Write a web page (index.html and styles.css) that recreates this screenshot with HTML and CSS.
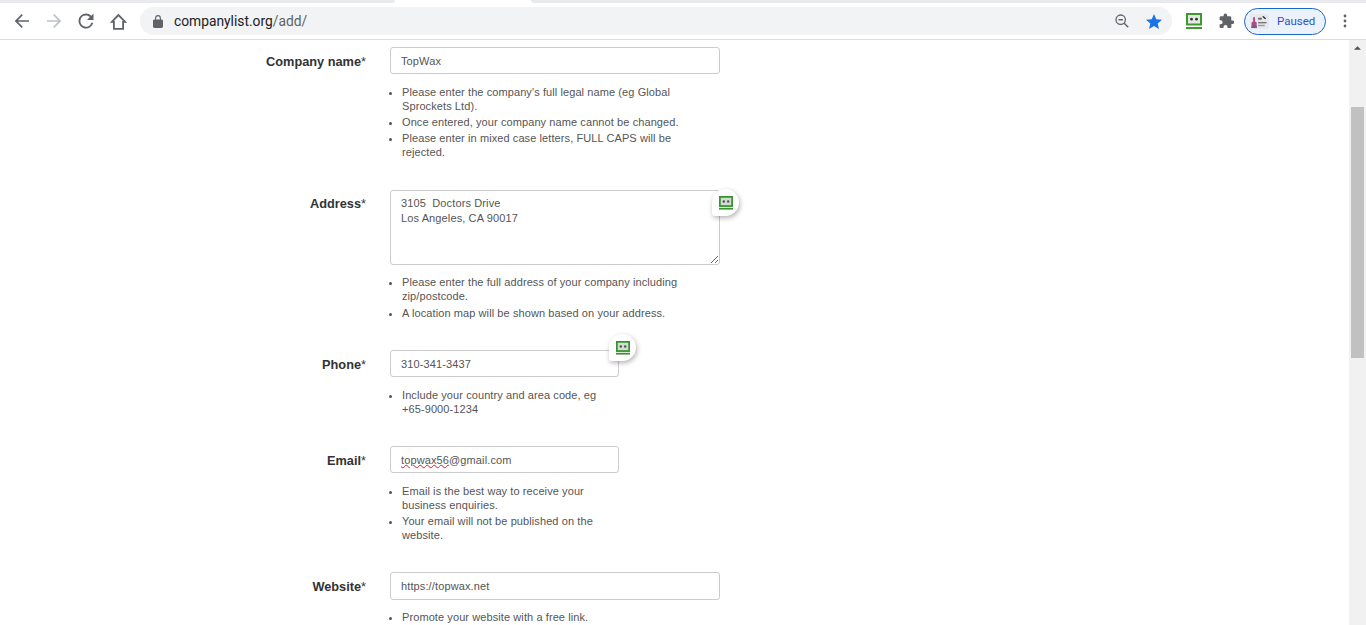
FILE: index.html
```html
<!DOCTYPE html>
<html lang="en">
<head>
<meta charset="utf-8">
<title>Add company</title>
<link rel="stylesheet" href="styles.css">
</head>
<body>
<header class="chrome">
  <div class="tabstrip">
    <div class="tab-rest tab-left"></div>
    <div class="tab-active"></div>
    <div class="tab-rest tab-right"></div>
  </div>
  <div class="toolbar">
    <svg class="nav-icon" viewBox="0 0 16 16"><path d="M15 7.200H3.900l4.900-5L7.700 1 .7 8l7 7 1.100-1.200-4.900-5H15z" fill="#5f6368"/></svg>
    <svg class="nav-icon" viewBox="0 0 16 16"><path d="M1 7.200h11.100l-4.900-5L8.300 1l7 7-7 7-1.100-1.200 4.900-5H1z" fill="#bdc1c6"/></svg>
    <svg class="nav-icon" viewBox="0 0 16 16"><path d="M13.300 2.700A7.400 7.400 0 0 0 8 .5a7.500 7.500 0 1 0 7.300 9.300h-2A5.600 5.600 0 1 1 8 2.400c1.500 0 2.900.6 3.900 1.700L9 7h6.500V.5z" fill="#5f6368"/></svg>
    <svg class="nav-icon home" viewBox="0 0 17 17"><path d="M8.500 2 1.800 8.900h2.100v6.900h9.200V8.900h2.100z" fill="none" stroke="#5f6368" stroke-width="1.800" stroke-linejoin="miter"/></svg>
    <div class="omnibox">
      <svg class="lock" viewBox="0 0 10 13"><path d="M8.500 4.400h-.6V3a2.900 2.900 0 0 0-5.800 0v1.400h-.6C.7 4.400 0 5 0 5.800v5.800c0 .8.700 1.400 1.500 1.400h7c.8 0 1.500-.6 1.500-1.400V5.800c0-.8-.7-1.400-1.500-1.400zM3.200 3a1.800 1.800 0 0 1 3.600 0v1.400H3.200z" fill="#5f6368"/></svg>
      <span class="url">companylist.org<span class="url-path">/add/</span></span>
      <svg class="zoom-out" viewBox="0 0 14 14"><circle cx="5.700" cy="5.700" r="4.700" fill="none" stroke="#5f6368" stroke-width="1.300"/><path d="M3.500 5.700h4.400M9.200 9.200l4 4" stroke="#5f6368" stroke-width="1.400" fill="none"/></svg>
      <svg class="star" viewBox="0 0 16 15"><path d="m8 0 2.300 5.200 5.700.5-4.300 3.800 1.300 5.500L8 12.100 3 15l1.300-5.500L0 5.700l5.700-.5z" fill="#1a73e8"/></svg>
    </div>
    <svg class="rf-toolbar" viewBox="0 0 16 16"><rect x="1" y="1" width="14" height="10.500" fill="#e4e8e2" stroke="#3c9a2e" stroke-width="2"/><circle cx="5.500" cy="6.200" r="1.400" fill="#333"/><circle cx="10.500" cy="6.200" r="1.400" fill="#333"/><rect y="14" width="16" height="2" fill="#3c9a2e"/></svg>
    <svg class="puzzle" viewBox="0 0 16 16"><path d="M14.300 7.400h-1V4.700c0-.8-.6-1.400-1.400-1.400H9.200v-1a1.800 1.800 0 0 0-3.600 0v1H3c-.8 0-1.400.6-1.400 1.400v2.500h1a2 2 0 0 1 0 4h-1v2.500c0 .8.600 1.400 1.400 1.400h2.500v-1a2 2 0 0 1 4 0v1h2.500c.8 0 1.400-.6 1.400-1.400V11h1a1.800 1.800 0 0 0 0-3.600z" fill="#5f6368"/></svg>
    <div class="profile">
      <svg class="avatar" viewBox="0 0 20 16"><rect width="20" height="16" rx="3" fill="#e6e8ee"/><path d="M1.500 15V9l1.700-1V3.500h2V8l1.800 1v6z" fill="#b04a80"/><rect x="1.500" y="12.500" width="5.500" height="2.500" fill="#6a5a90"/><rect x="8.500" y="4" width="4" height="2" fill="#666"/><path d="m14 2 3 2.500-1 1-3-2.500z" fill="#222"/><rect x="8.500" y="8.500" width="9" height="1.500" fill="#777"/><rect x="8.500" y="11.500" width="7" height="1.500" fill="#999"/></svg>
      <span class="profile-text">Paused</span>
    </div>
    <svg class="kebab" viewBox="0 0 4 14"><circle cx="2" cy="2" r="1.400"/><circle cx="2" cy="7" r="1.400"/><circle cx="2" cy="12" r="1.400"/></svg>
  </div>
</header>

<div class="viewport">
  <main class="page">
    <section class="row row-first">
      <div class="label">Company name<span class="req">*</span></div>
      <div class="control wide">
        <div class="field">TopWax</div>
        <ul class="hints">
          <li>Please enter the company's full legal name (eg Global Sprockets Ltd).</li>
          <li>Once entered, your company name cannot be changed.</li>
          <li>Please enter in mixed case letters, FULL CAPS will be rejected.</li>
        </ul>
      </div>
    </section>

    <section class="row">
      <div class="label label-area">Address<span class="req">*</span></div>
      <div class="control wide">
        <div class="input-wrap">
          <textarea class="area" readonly>3105  Doctors Drive
Los Angeles, CA 90017</textarea>
          <div class="bubble bubble-address">
            <svg viewBox="0 0 16 16"><rect x="1" y="1" width="14" height="10.500" fill="#d3dcd0" stroke="#379230" stroke-width="2"/><circle cx="5.500" cy="6.200" r="1.400" fill="#4d5a4a"/><circle cx="10.500" cy="6.200" r="1.400" fill="#4d5a4a"/><rect y="13.500" width="16" height="2" fill="#379230"/></svg>
          </div>
        </div>
        <ul class="hints hints-tight">
          <li>Please enter the full address of your company including zip/postcode.</li>
          <li>A location map will be shown based on your address.</li>
        </ul>
      </div>
    </section>

    <section class="row">
      <div class="label">Phone<span class="req">*</span></div>
      <div class="control narrow">
        <div class="input-wrap">
          <div class="field">310-341-3437</div>
          <div class="bubble bubble-phone">
            <svg viewBox="0 0 16 16"><rect x="1" y="1" width="14" height="10.500" fill="#d3dcd0" stroke="#379230" stroke-width="2"/><circle cx="5.500" cy="6.200" r="1.400" fill="#4d5a4a"/><circle cx="10.500" cy="6.200" r="1.400" fill="#4d5a4a"/><rect y="13.500" width="16" height="2" fill="#379230"/></svg>
          </div>
        </div>
        <ul class="hints">
          <li>Include your country and area code, eg +65-9000-1234</li>
        </ul>
      </div>
    </section>

    <section class="row">
      <div class="label">Email<span class="req">*</span></div>
      <div class="control narrow">
        <div class="field"><span class="misspelt">topwax56</span>@gmail.com</div>
        <ul class="hints">
          <li>Email is the best way to receive your business enquiries.</li>
          <li>Your email will not be published on the website.</li>
        </ul>
      </div>
    </section>

    <section class="row">
      <div class="label">Website<span class="req">*</span></div>
      <div class="control wide">
        <div class="field field-tall">https://topwax.net</div>
        <ul class="hints hints-tight">
          <li>Promote your website with a free link.</li>
        </ul>
      </div>
    </section>
  </main>
  <aside class="scrollbar">
    <svg class="scroll-up" viewBox="0 0 8 4"><path d="M4 0 8 4H0z" fill="#505050"/></svg>
    <div class="scroll-thumb"></div>
  </aside>
</div>
</body>
</html>
```

FILE: styles.css
```css
* { box-sizing: border-box; }
html, body { height: 100%; }
body {
  margin: 0;
  height: 625px;
  overflow: hidden;
  background: #fff;
  font-family: "Liberation Sans", Arial, sans-serif;
  color: #333;
}

/* Browser chrome */
.chrome { height: 40px; border-bottom: 1px solid #dadce0; background: #fff; }
.tabstrip { display: flex; height: 3px; }
.tab-rest { background: #e8eaed; }
.tab-left { width: 395px; border-bottom-right-radius: 3px; }
.tab-active { width: 136px; background: #fff; }
.tab-right { flex: 1; border-bottom-left-radius: 3px; }
.toolbar { display: flex; align-items: center; height: 36px; }
.nav-icon { width: 16px; height: 16px; flex: none; margin-left: 14px; }
.nav-icon:nth-child(2) { margin-left: 16px; }
.nav-icon:nth-child(3) { margin-left: 16px; }
.nav-icon.home { width: 17px; height: 17px; margin-left: 16px; }
.omnibox {
  display: flex;
  align-items: center;
  width: 1032px;
  height: 28px;
  margin-left: 13px;
  padding: 0 10px 0 13px;
  border-radius: 14px;
  background: #f1f3f4;
}
.lock { width: 10px; height: 13px; flex: none; }
.url { margin-left: 11px; font-family: "Roboto", "Liberation Sans", sans-serif; font-size: 13.800px; color: #202124; flex: 1; }
.url-path { color: #5f6368; }
.zoom-out { width: 14px; height: 14px; margin-right: 17px; }
.star { width: 16px; height: 15px; }
.rf-toolbar { width: 16px; height: 16px; flex: none; margin-left: 14px; }
.puzzle { width: 16px; height: 16px; flex: none; margin-left: 16px; }
.profile {
  display: flex;
  align-items: center;
  flex: none;
  width: 82px;
  height: 27px;
  margin-left: 10px;
  padding-left: 5px;
  border: 1px solid #1a66cc;
  border-radius: 14px;
  background: #ecf2fb;
}
.avatar { width: 19px; height: 15px; flex: none; }
.profile-text { margin-left: 8px; font-family: "Roboto", "Liberation Sans", sans-serif; font-size: 11.500px; color: #2a55c8; }
.kebab { width: 4px; height: 14px; flex: none; margin-left: 17px; fill: #5f6368; }

/* Page */
.viewport { display: flex; height: 585px; overflow: hidden; }
.page { flex: 1; padding-top: 7px; }
.row { display: flex; margin-bottom: 30px; }
.row-first { margin-bottom: 31px; }
.label {
  width: 366px;
  padding-top: 6px;
  font-size: 12.750px;
  line-height: 18px;
  font-weight: 700;
  text-align: right;
}
.label-area { padding-top: 5px; }
.req { font-weight: 400; }
.control { margin-left: 24px; }
.wide { width: 330px; }
.narrow { width: 229px; }
.input-wrap { position: relative; }
.field {
  height: 27px;
  padding: 0 10px;
  border: 1px solid #ccc;
  border-radius: 3px;
  background: #fff;
  font-size: 11px;
  letter-spacing: .12px;
  line-height: 26px;
  color: #555;
}
.field-tall { height: 28px; line-height: 26px; }
.area {
  display: block;
  width: 100%;
  height: 75px;
  padding: 5px 10px;
  border: 1px solid #ccc;
  border-radius: 3px;
  font-family: inherit;
  font-size: 11px;
  letter-spacing: .12px;
  line-height: 15px;
  color: #555;
  outline: none;
  resize: both;
}
.misspelt { text-decoration: underline wavy #e02020 1px; text-underline-offset: 0; }
.hints {
  margin: 11px 0 0;
  padding: 0 16px 0 12px;
  font-size: 11px;
  letter-spacing: .09px;
  line-height: 14px;
  color: #555;
}
.hints li { margin-bottom: 2px; }
.hints li:last-child { margin-bottom: 0; }
.hints-tight { margin-top: 10px; }
.hints-tight li { margin-bottom: 3px; }
.bubble {
  position: absolute;
  display: flex;
  align-items: center;
  justify-content: center;
  width: 27px;
  height: 27px;
  border-radius: 50% 50% 50% 3px;
  background: #fff;
  box-shadow: 1px 2px 5px rgba(0, 0, 0, .3);
}
.bubble svg { width: 14px; height: 14px; }
.bubble-address { top: -1px; left: 322px; }
.bubble-phone { top: -16px; left: 219px; }

/* Scrollbar */
.scrollbar { position: relative; flex: none; width: 17px; background: #f1f1f1; }
.scroll-up { position: absolute; top: 6px; left: 5px; width: 7px; height: 4px; }
.scroll-thumb { position: absolute; top: 67px; left: 2px; width: 13px; height: 251px; background: #c1c1c1; }
```
